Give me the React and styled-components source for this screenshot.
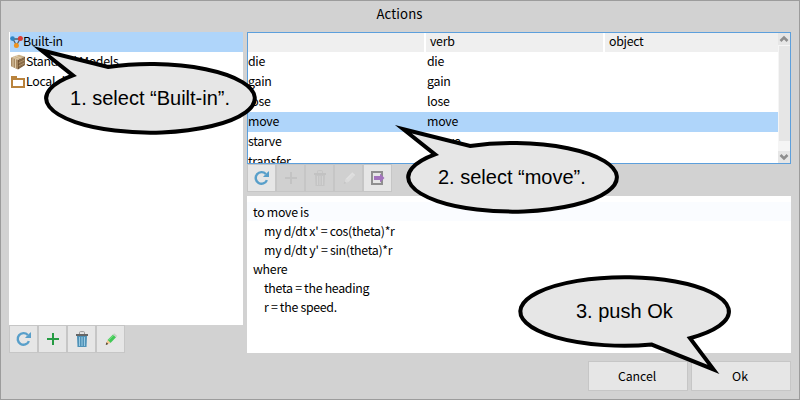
import React from 'react';
import styled, { createGlobalStyle } from 'styled-components';

const GlobalStyle = createGlobalStyle`
  * { box-sizing: border-box; }
  body { margin: 0; background: #d2d2d2; }
`;

const Dialog = styled.main`
  position: relative;
  display: flex;
  flex-direction: column;
  width: 800px;
  height: 400px;
  overflow: hidden;
  padding: 0 8px;
  border: 1px solid #9c9c9c;
  background: #d2d2d2;
  color: #000;
  font: 12.35px/20px "Noto Sans CJK JP", sans-serif;
  letter-spacing: -0.28px;
  word-spacing: -0.1px;
  white-space: pre;
`;

const Title = styled.h1`
  height: 31px;
  margin: 0;
  padding: 3px 1px 0 0;
  font-size: 13.2px;
  font-weight: 400;
  letter-spacing: 0.1px;
  line-height: 20px;
  text-align: center;
`;

const Panes = styled.div`
  display: grid;
  grid-template-columns: 234px 544px;
  column-gap: 4px;
  height: 321px;
`;

const Pane = styled.section`
  display: flex;
  flex-direction: column;
  min-width: 0;
`;

const SourceList = styled.div`
  height: 293px;
  padding-left: 1px;
  background: #fff;
`;

const SourceRow = styled.div`
  display: flex;
  align-items: center;
  height: 20px;
  background: ${(p) => (p.$selected ? '#afd5fa' : 'transparent')};
  line-height: 18px;

  span { height: 20px; }
`;

const Toolbar = styled.div`
  display: flex;
  height: 28px;
`;

const ToolButton = styled.button`
  display: flex;
  align-items: center;
  justify-content: center;
  width: 29px;
  height: 28px;
  padding: 0;
  border: 1px solid #c6c6c6;
  background: ${(p) => (p.$disabled ? '#d0d0d0' : '#e6e6e6')};
`;

const Table = styled.div`
  display: grid;
  grid-template-columns: 530px 12px;
  height: 132px;
  border: 1px solid #5c9fdc;
  background: #fff;
  overflow: hidden;
`;

const TableBody = styled.div`
  height: 130px;
  overflow: hidden;
`;

const HeaderRow = styled.div`
  display: grid;
  grid-template-columns: 176px 177px 173px;
  column-gap: 2px;
  height: 19px;
`;

const HeaderCell = styled.div`
  padding-left: 4px;
  background: #efefef;
  line-height: 16px;
`;

const Row = styled.div`
  display: grid;
  grid-template-columns: 179px 1fr;
  height: 20px;
  background: ${(p) => (p.$selected ? '#afd5fa' : 'transparent')};
  line-height: 18px;
`;

const Scrollbar = styled.div`
  display: flex;
  flex-direction: column;
  background: #f5f5f5;
`;

const ScrollArrow = styled.div`
  display: flex;
  align-items: center;
  justify-content: center;
  height: 12px;
  background: #e6e6e6;
`;

const ScrollThumb = styled.div`
  height: 95px;
  margin: 1px 0 10px 1px;
  background: #e6e6e6;
`;

const Editor = styled.div`
  height: 157px;
  margin-top: 4px;
  padding-top: 6px;
  background: #fff;
`;

const CodeLine = styled.div`
  height: 19px;
  padding-left: ${(p) => (p.$indent ? 17 : 6)}px;
  background: ${(p) => (p.$current ? '#fafcff' : 'transparent')};
  line-height: 20px;
`;

const Footer = styled.footer`
  display: flex;
  justify-content: flex-end;
  gap: 3px;
  margin-top: 8px;
`;

const DialogButton = styled.button`
  width: 100px;
  height: 30px;
  padding: 0 2px 1px 0;
  border: 1px solid #c6c6c6;
  background: #e6e6e6;
  color: #000;
  font: inherit;
  letter-spacing: -0.1px;
`;

const Annotations = styled.svg`
  position: absolute;
  top: -1px;
  left: -1px;
  letter-spacing: 0;
  word-spacing: 0;
  pointer-events: none;
`;

const BalloonText = styled.text`
  fill: #000;
  font: 20px "Liberation Sans", sans-serif;
`;

const NodesIcon = () => (
  <svg width="13" height="13" viewBox="0 0 13 13">
    <path d="M3 3h7L6.5 9.5Z" fill="none" stroke="#555e66" strokeWidth="1.3" />
    <circle cx="2.5" cy="2.6" r="2.3" fill="#2f86c4" />
    <circle cx="10.4" cy="2.6" r="2.5" fill="#dc3b34" />
    <circle cx="6.4" cy="9.4" r="2.5" fill="#ef9420" />
  </svg>
);

const PackageIcon = () => (
  <svg width="16" height="16" viewBox="0 0 16 16">
    <path d="M1 3.6 9 .7l6 2-7 3Z" fill="#c9ae85" />
    <path d="M1 3.6 8 5.7v9.7L1 12.2Z" fill="#a98a63" />
    <path d="m8 5.7 7-3V11l-7 4.4Z" fill="#6d4f31" />
    <path d="M3 4.3v8.7M5.5 5v9.1M3 3l6 2.2M5.5 2.1l6 2" stroke="#dfcba9" fill="none" />
    <path d="M10 5.3v8.5m2-9.5v8.2M14 3.6v7.6M8.5 9l6-3m-6 6 6-3" stroke="#b89a70" strokeWidth=".8" fill="none" />
  </svg>
);

const FolderIcon = () => (
  <svg width="16" height="16" viewBox="0 0 16 16">
    <path d="M1 2h6v2h8v10H1Z" fill="#b9833d" />
    <path d="M3 6h10v6H3Z" fill="#fff" />
  </svg>
);

const RefreshIcon = () => (
  <svg width="16" height="16" viewBox="0 0 16 16">
    <path d="M12.9 10.1A5.8 5.8 0 1 1 11.8 4" fill="none" stroke="#589fca" strokeWidth="2.4" />
    <path d="M15 1v6H9l1.8-2 2-2Z" fill="#589fca" />
  </svg>
);

const PlusIcon = ({ color }) => (
  <svg width="16" height="16" viewBox="0 0 16 16">
    <path d="M7 2h2v5h5v2H9v5H7V9H2V7h5Z" fill={color} />
  </svg>
);

const TrashIcon = ({ muted }) => (
  <svg width="16" height="18" viewBox="0 0 16 18">
    <path d="M5.5 4V2.6q0-1 1-1h3q1 0 1 1V4" fill="none" stroke={muted ? '#c5c5c5' : '#999'} />
    <path d="M3 6h10l-.5 11h-9Z" fill={muted ? '#c5c5c5' : '#4f92b8'} />
    <path d="M5.5 7v9M8 7v9m2.5-9v9" stroke={muted ? '#d2d2d2' : '#9bcbe3'} />
    <path d="M2 4h12v2H2Z" fill={muted ? '#c2c2c2' : '#666'} />
  </svg>
);

const PencilIcon = ({ muted }) => (
  <svg width="16" height="16" viewBox="0 0 16 16">
    <path d="M4.5 9 10 3.4l3 2.8-5.5 5.9Z" fill={muted ? '#dcdcdc' : '#42c957'} />
    <path d="m5.5 9.2 5.3-5.3" stroke={muted ? '#e2e2e2' : '#83e58d'} />
    <path d="m10 3.4 1.2-1.2 3 2.8L13 6.2Z" fill={muted ? '#e0e0e0' : '#c3cfc3'} />
    <path d="m4.5 9 3 3.1L3 13.5Z" fill={muted ? '#dadada' : '#f5c78c'} />
    <path d="m3.6 11.3 1.6 1.6L2.6 14Z" fill={muted ? '#c4c4c4' : '#4a3b2d'} />
  </svg>
);

const ExportIcon = () => (
  <svg width="16" height="16" viewBox="0 0 16 16">
    <path d="M1 1h12v14H1Zm2 2v10h8V3Z" fill="#8f8f8f" fillRule="evenodd" />
    <path d="M4 6h6V3.5L14.5 8 10 12.5V10H4Z" fill="#a373bd" />
  </svg>
);

const ArrowIcon = ({ down }) => (
  <svg width="10" height="8" viewBox="0 0 10 8">
    <path d={down ? 'm1.5 2 3.5 3.5L8.5 2' : 'M1.5 6 5 2.5 8.5 6'} fill="none" stroke="#8e8e8e" strokeWidth="2.6" />
  </svg>
);

const leftTail = 'M-42.4-31.4A104.3 34.3 0 1 1-77.5-23L-109.1-48.2Z';
const rightTail = 'M27.2 33.1A104.3 34.3 0 1 1 65.5 26.7L89 57.9Z';

const Balloon = ({ x, y, shape, textX, textY, children }) => (
  <g transform={`translate(${x} ${y})`}>
    <path d={shape} fill="#e6e6e6" stroke="#000" strokeWidth="4" strokeMiterlimit="20" />
    <BalloonText x={textX} y={textY}>{children}</BalloonText>
  </g>
);

const verbs = ['die', 'gain', 'lose', 'move', 'starve', 'transfer'];

const code = [
  ['to move is', false],
  ["my d/dt x' = cos(theta)*r", true],
  ["my d/dt y' = sin(theta)*r", true],
  ['where', false],
  ['theta = the heading', true],
  ['r = the speed.', true],
];

export default function App() {
  return (
    <>
      <GlobalStyle />
      <Dialog>
        <Title>Actions</Title>
        <Panes>
          <Pane>
            <SourceList>
              <SourceRow $selected><NodesIcon /><span>Built-in</span></SourceRow>
              <SourceRow><PackageIcon /><span>Standard Models</span></SourceRow>
              <SourceRow><FolderIcon /><span>Local directory</span></SourceRow>
            </SourceList>
            <Toolbar>
              <ToolButton><RefreshIcon /></ToolButton>
              <ToolButton><PlusIcon color="#259b43" /></ToolButton>
              <ToolButton><TrashIcon /></ToolButton>
              <ToolButton><PencilIcon /></ToolButton>
            </Toolbar>
          </Pane>
          <Pane>
            <Table>
              <TableBody>
                <HeaderRow>
                  <HeaderCell />
                  <HeaderCell>verb</HeaderCell>
                  <HeaderCell>object</HeaderCell>
                </HeaderRow>
                {verbs.map((verb) => (
                  <Row key={verb} $selected={verb === 'move'}>
                    <span>{verb}</span>
                    <span>{verb}</span>
                  </Row>
                ))}
              </TableBody>
              <Scrollbar>
                <ScrollArrow><ArrowIcon /></ScrollArrow>
                <ScrollThumb />
                <ScrollArrow><ArrowIcon down /></ScrollArrow>
              </Scrollbar>
            </Table>
            <Toolbar>
              <ToolButton><RefreshIcon /></ToolButton>
              <ToolButton $disabled><PlusIcon color="#c3c3c3" /></ToolButton>
              <ToolButton $disabled><TrashIcon muted /></ToolButton>
              <ToolButton $disabled><PencilIcon muted /></ToolButton>
              <ToolButton><ExportIcon /></ToolButton>
            </Toolbar>
            <Editor>
              {code.map(([line, indent], i) => (
                <CodeLine key={line} $indent={indent} $current={i === 0}>{line}</CodeLine>
              ))}
            </Editor>
          </Pane>
        </Panes>
        <Footer>
          <DialogButton>Cancel</DialogButton>
          <DialogButton>Ok</DialogButton>
        </Footer>
        <Annotations width="800" height="400" viewBox="0 0 800 400">
          <Balloon x={150.4} y={98.4} shape={leftTail} textX={-80.4} textY={6.6}>1. select “Built-in”.</Balloon>
          <Balloon x={512.5} y={177.4} shape={leftTail} textX={-74.5} textY={6.6}>2. select “move”.</Balloon>
          <Balloon x={624.5} y={311.5} shape={rightTail} textX={-48.5} textY={6.5}>3. push Ok</Balloon>
        </Annotations>
      </Dialog>
    </>
  );
}
